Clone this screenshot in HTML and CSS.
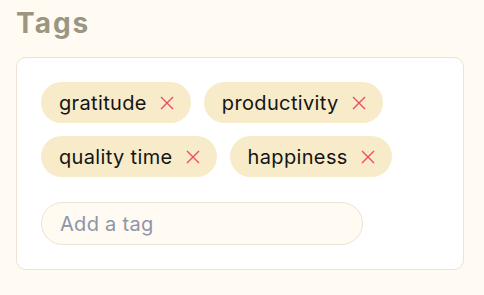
FILE: index.html
```html
<!DOCTYPE html>
<html>
<head>
<meta charset="utf-8">
<link rel="stylesheet" href="styles.css">
</head>
<body>
<section class="tags-section">
  <h2 class="title">Tags</h2>
  <div class="card">
    <ul class="tag-list">
      <li class="tag"><span>gratitude</span><button class="remove" aria-label="Remove"><svg viewBox="0 0 14 14" width="14" height="14"><path d="M1 1L13 13M13 1L1 13"/></svg></button></li>
      <li class="tag"><span>productivity</span><button class="remove" aria-label="Remove"><svg viewBox="0 0 14 14" width="14" height="14"><path d="M1 1L13 13M13 1L1 13"/></svg></button></li>
      <li class="tag"><span>quality time</span><button class="remove" aria-label="Remove"><svg viewBox="0 0 14 14" width="14" height="14"><path d="M1 1L13 13M13 1L1 13"/></svg></button></li>
      <li class="tag"><span>happiness</span><button class="remove" aria-label="Remove"><svg viewBox="0 0 14 14" width="14" height="14"><path d="M1 1L13 13M13 1L1 13"/></svg></button></li>
    </ul>
    <input class="tag-input" type="text" placeholder="Add a tag">
  </div>
</section>
</body>
</html>
```
FILE: styles.css
```css
html, body {
  margin: 0;
  padding: 0;
  background: #fffaf2;
}
body {
  font-family: "Inter", "Liberation Sans", sans-serif;
  width: 484px;
  height: 295px;
  overflow: hidden;
}
.tags-section {
  padding: 5px 20px 0 16px;
}
.title {
  margin: 0 0 16px 0;
  font-family: "Inter", "Liberation Sans", sans-serif;
  font-weight: 700;
  font-size: 28px;
  line-height: 36px;
  color: #9b9682;
  letter-spacing: 2px;
}
.card {
  background: #ffffff;
  border: 1px solid #ece3d2;
  border-radius: 10px;
  padding: 24px;
}
.tag-list {
  list-style: none;
  margin: 0;
  padding: 0;
  display: flex;
  flex-wrap: wrap;
  gap: 13px;
}
.tag {
  display: flex;
  align-items: center;
  gap: 13px;
  height: 41px;
  padding: 0 17px 0 18px;
  background: #f8ebc9;
  border-radius: 21px;
  font-size: 20px;
  letter-spacing: 0.35px;
  color: #141414;
  box-sizing: border-box;
}
.remove {
  border: none;
  background: none;
  padding: 0;
  display: flex;
  cursor: pointer;
}
.remove svg {
  width: 14px;
  height: 14px;
}
.remove path {
  stroke: #ee4a68;
  stroke-width: 1.4;
  fill: none;
}
.tag-input {
  display: block;
  margin-top: 25px;
  width: 322px;
  height: 43px;
  box-sizing: border-box;
  border: 1px solid #ece3d2;
  border-radius: 22px;
  background: #fffaf2;
  padding: 0 18px;
  font-family: "Inter", "Liberation Sans", sans-serif;
  font-size: 20px;
  letter-spacing: 0.3px;
  color: #141414;
  outline: none;
}
.tag-input::placeholder {
  color: #8e95a8;
}
```
